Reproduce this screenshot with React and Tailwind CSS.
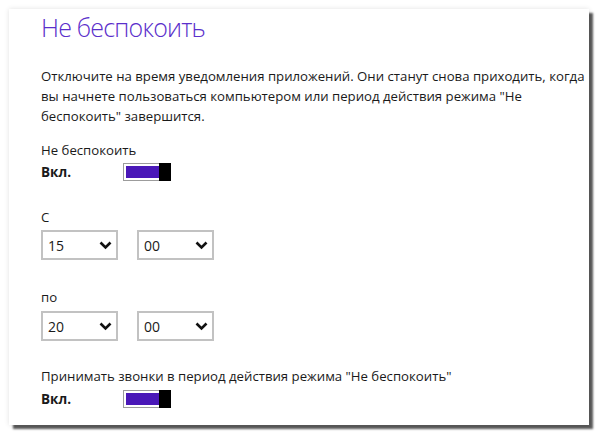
import React from 'react'

const font = { fontFamily: '"Open Sans", "Noto Sans", sans-serif' }

function Toggle() {
  return (
    <div className="relative w-[48px] h-[18px] border border-[#9c9c9c] bg-white p-[2px]">
      <div className="h-full bg-[#4a18b8]" />
      <div className="absolute right-[-1px] top-[-1px] w-[12px] h-[18px] bg-black" />
    </div>
  )
}

function Select({ value }) {
  return (
    <div className="w-[77px] h-[30px] border-2 border-[#c2c2c2] bg-white flex items-center justify-between pl-[5px] pr-[4px]">
      <span className="text-[14px] text-[#1a1a1a]">{value}</span>
      <svg width="13" height="9" viewBox="0 0 13 9">
        <polyline points="1.5,1.5 6.5,6.5 11.5,1.5" fill="none" stroke="#111" strokeWidth="2.6" />
      </svg>
    </div>
  )
}

export default function App() {
  return (
    <div className="w-[600px] h-[436px] bg-white pt-[9px] pl-[9px]" style={font}>
      <div className="w-[580px] h-[416px] bg-white pl-[32px] shadow-[4px_4px_2px_rgba(0,0,0,0.65),0_0_5px_rgba(0,0,0,0.12)]">
        <h1 className="text-[25px] leading-[36px] font-light tracking-[-0.8px] text-[#5b2fcb] whitespace-nowrap">Не беспокоить</h1>

        <p className="mt-[21px] text-[13.2px] leading-[20px] text-[#1a1a1a] whitespace-nowrap">
          Отключите на время уведомления приложений. Они станут снова приходить, когда<br />
          вы начнете пользоваться компьютером или период действия режима "Не<br />
          беспокоить" завершится.
        </p>

        <div className="mt-[14px] text-[13.2px] leading-[20px] text-[#1a1a1a]">Не беспокоить</div>
        <div className="mt-[3px] flex items-center h-[18px]">
          <span className="w-[82px] text-[13.5px] font-bold text-[#1a1a1a]">Вкл.</span>
          <Toggle />
        </div>

        <div className="mt-[26px] text-[13.2px] leading-[20px] text-[#1a1a1a]">С</div>
        <div className="mt-[3px] flex gap-[19px]">
          <Select value="15" />
          <Select value="00" />
        </div>

        <div className="mt-[27px] text-[13.2px] leading-[20px] text-[#1a1a1a]">по</div>
        <div className="mt-[4px] flex gap-[19px]">
          <Select value="20" />
          <Select value="00" />
        </div>

        <div className="mt-[25px] text-[13.2px] leading-[20px] text-[#1a1a1a] whitespace-nowrap">
          Принимать звонки в период действия режима "Не беспокоить"
        </div>
        <div className="mt-[4px] flex items-center h-[18px]">
          <span className="w-[82px] text-[13.5px] font-bold text-[#1a1a1a]">Вкл.</span>
          <Toggle />
        </div>
      </div>
    </div>
  )
}
